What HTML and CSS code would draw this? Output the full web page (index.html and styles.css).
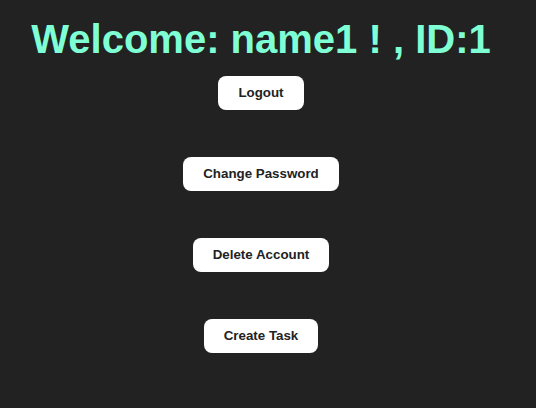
FILE: index.html
```html
<!DOCTYPE html>
<html>
<head>
<meta charset="utf-8">
<link rel="stylesheet" href="styles.css">
</head>
<body>
<div class="page">
  <h1 class="title">Welcome: name1 ! , ID:1</h1>
  <div class="actions">
    <button class="btn">Logout</button>
    <button class="btn">Change Password</button>
    <button class="btn">Delete Account</button>
    <button class="btn">Create Task</button>
  </div>
</div>
</body>
</html>
```
FILE: styles.css
```css
html, body {
  background: #222222;
}
body {
  margin: 0;
  padding: 0 22px 0 8px;
  font-family: "Liberation Sans", Arial, sans-serif;
}
.page {
  display: flex;
  flex-direction: column;
  align-items: center;
}
.title {
  color: #7fffd4;
  font-size: 40px;
  font-weight: bold;
  margin: 16px 0 14px;
  line-height: 46px;
}
.actions {
  display: flex;
  flex-direction: column;
  align-items: center;
  gap: 47px;
}
.btn {
  background: #ffffff;
  color: #222222;
  border: none;
  border-radius: 8px;
  padding: 9px 20px;
  font-family: "Liberation Sans", Arial, sans-serif;
  font-size: 13.333px;
  font-weight: bold;
  line-height: 16px;
  height: 34px;
}
```
